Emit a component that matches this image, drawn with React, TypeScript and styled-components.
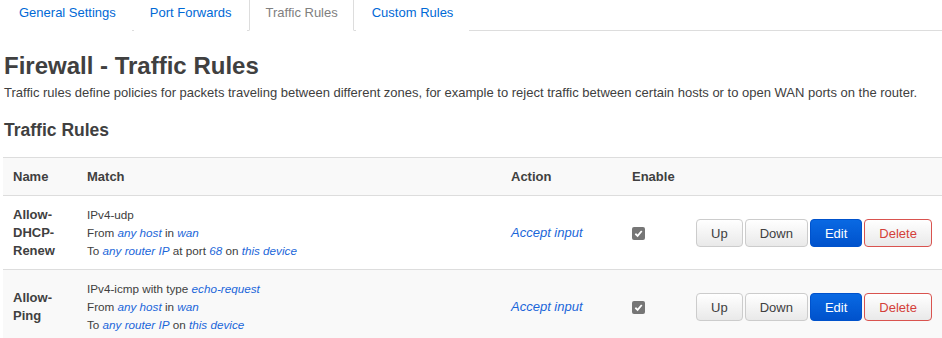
import React from "react";
import styled, { createGlobalStyle } from "styled-components";

const GlobalStyle = createGlobalStyle`
  html, body {
    margin: 0;
    padding: 0;
    background: #fff;
    font-family: "Liberation Sans", Arial, sans-serif;
    color: #404040;
  }
`;

const Page = styled.div`
  padding-left: 3px;
  width: 939px;
`;

const Tabs = styled.ul`
  display: flex;
  list-style: none;
  margin: 0;
  padding: 0;
  border-bottom: 1px solid #ddd;
  height: 30px;
`;

const Tab = styled.li<{ $active?: boolean }>`
  margin-right: 2px;
  margin-bottom: -1px;
  padding: 0 15px;
  height: 31px;
  line-height: 25px;
  font-size: 13px;
  box-sizing: border-box;
  color: ${(p) => (p.$active ? "#808080" : "#0069d6")};
  background: #fff;
  border: 1px solid ${(p) => (p.$active ? "#ddd" : "transparent")};
  border-top: none;
  border-bottom: ${(p) => (p.$active ? "1px solid #fff" : "none")};
`;

const Title = styled.h2`
  margin: 21px 0 0 1px;
  font-size: 24px;
  line-height: 28px;
  font-weight: bold;
  color: #404040;
`;

const Description = styled.p`
  margin: 4px 0 0 1px;
  font-size: 13px;
  line-height: 18px;
`;

const SectionTitle = styled.h3`
  margin: 17px 0 0 1px;
  font-size: 17.5px;
  line-height: 22px;
  font-weight: bold;
`;

const Table = styled.table`
  margin-top: 16px;
  width: 939px;
  border-collapse: collapse;
  table-layout: fixed;
  font-size: 11.7px;
  line-height: 18px;
`;

const HeadCell = styled.th<{ $w?: number }>`
  width: ${(p) => (p.$w ? `${p.$w}px` : "auto")};
  box-sizing: border-box;
  padding: 10px 10px 9px;
  text-align: left;
  font-size: 13px;
  font-weight: bold;
  background: #f9f9f9;
  border-top: 1px solid #ddd;
`;

const Row = styled.tr<{ $striped?: boolean }>`
  background: ${(p) => (p.$striped ? "#f9f9f9" : "#fff")};
  border-top: 1px solid #ddd;
`;

const Cell = styled.td`
  padding: 10px 10px 9px;
  vertical-align: middle;
`;

const NameCell = styled(Cell)`
  font-size: 13px;
  font-weight: bold;
  line-height: 18px;
`;

const Link = styled.em`
  color: #1a66d9;
  font-style: italic;
`;

const ActionLink = styled(Link)`
  font-size: 13px;
`;

const Checkbox = styled.span`
  display: inline-flex;
  align-items: center;
  justify-content: center;
  width: 13px;
  height: 13px;
  border-radius: 2px;
  background: #767676;
  vertical-align: middle;
`;

const Actions = styled.div`
  display: flex;
  gap: 2px;
`;

type Variant = "default" | "primary" | "danger";

const Button = styled.button<{ $variant?: Variant }>`
  height: 28px;
  padding: 0 14px;
  border-radius: 4px;
  font-family: inherit;
  font-size: 13px;
  border: 1px solid
    ${(p) =>
      p.$variant === "primary"
        ? "#0052cc"
        : p.$variant === "danger"
        ? "#d9534f"
        : "#ccc"};
  color: ${(p) =>
    p.$variant === "primary"
      ? "#fff"
      : p.$variant === "danger"
      ? "#d43f3a"
      : "#404040"};
  background: ${(p) =>
    p.$variant === "primary"
      ? "linear-gradient(#0969e3, #0052cc)"
      : "linear-gradient(#fff, #e9e9e9)"};
  cursor: pointer;
`;

const Check = () => (
  <svg width="9" height="9" viewBox="0 0 10 10">
    <path d="M1.5 5.3 L4 7.6 L8.6 2.2" fill="none" stroke="#fff" strokeWidth="2" />
  </svg>
);

const rules = [
  {
    name: ["Allow-", "DHCP-", "Renew"],
    match: [
      <>IPv4-udp</>,
      <>
        From <Link>any host</Link> in <Link>wan</Link>
      </>,
      <>
        To <Link>any router IP</Link> at port <Link>68</Link> on <Link>this device</Link>
      </>,
    ],
  },
  {
    name: ["Allow-", "Ping"],
    match: [
      <>
        IPv4-icmp with type <Link>echo-request</Link>
      </>,
      <>
        From <Link>any host</Link> in <Link>wan</Link>
      </>,
      <>
        To <Link>any router IP</Link> on <Link>this device</Link>
      </>,
    ],
  },
];

export default function App() {
  return (
    <Page>
      <GlobalStyle />
      <Tabs>
        <Tab>General Settings</Tab>
        <Tab>Port Forwards</Tab>
        <Tab $active>Traffic Rules</Tab>
        <Tab>Custom Rules</Tab>
      </Tabs>
      <Title>Firewall - Traffic Rules</Title>
      <Description>
        Traffic rules define policies for packets traveling between different zones, for example to
        reject traffic between certain hosts or to open WAN ports on the router.
      </Description>
      <SectionTitle>Traffic Rules</SectionTitle>
      <Table>
        <thead>
          <tr>
            <HeadCell $w={74}>Name</HeadCell>
            <HeadCell $w={424}>Match</HeadCell>
            <HeadCell $w={121}>Action</HeadCell>
            <HeadCell $w={64}>Enable</HeadCell>
            <HeadCell />
          </tr>
        </thead>
        <tbody>
          {rules.map((r, i) => (
            <Row key={i} $striped={i % 2 === 1}>
              <NameCell>
                {r.name.map((n, j) => (
                  <div key={j}>{n}</div>
                ))}
              </NameCell>
              <Cell>
                {r.match.map((m, j) => (
                  <div key={j}>{m}</div>
                ))}
              </Cell>
              <Cell>
                <ActionLink>Accept input</ActionLink>
              </Cell>
              <Cell>
                <Checkbox>
                  <Check />
                </Checkbox>
              </Cell>
              <Cell>
                <Actions>
                  <Button>Up</Button>
                  <Button>Down</Button>
                  <Button $variant="primary">Edit</Button>
                  <Button $variant="danger">Delete</Button>
                </Actions>
              </Cell>
            </Row>
          ))}
        </tbody>
      </Table>
    </Page>
  );
}
